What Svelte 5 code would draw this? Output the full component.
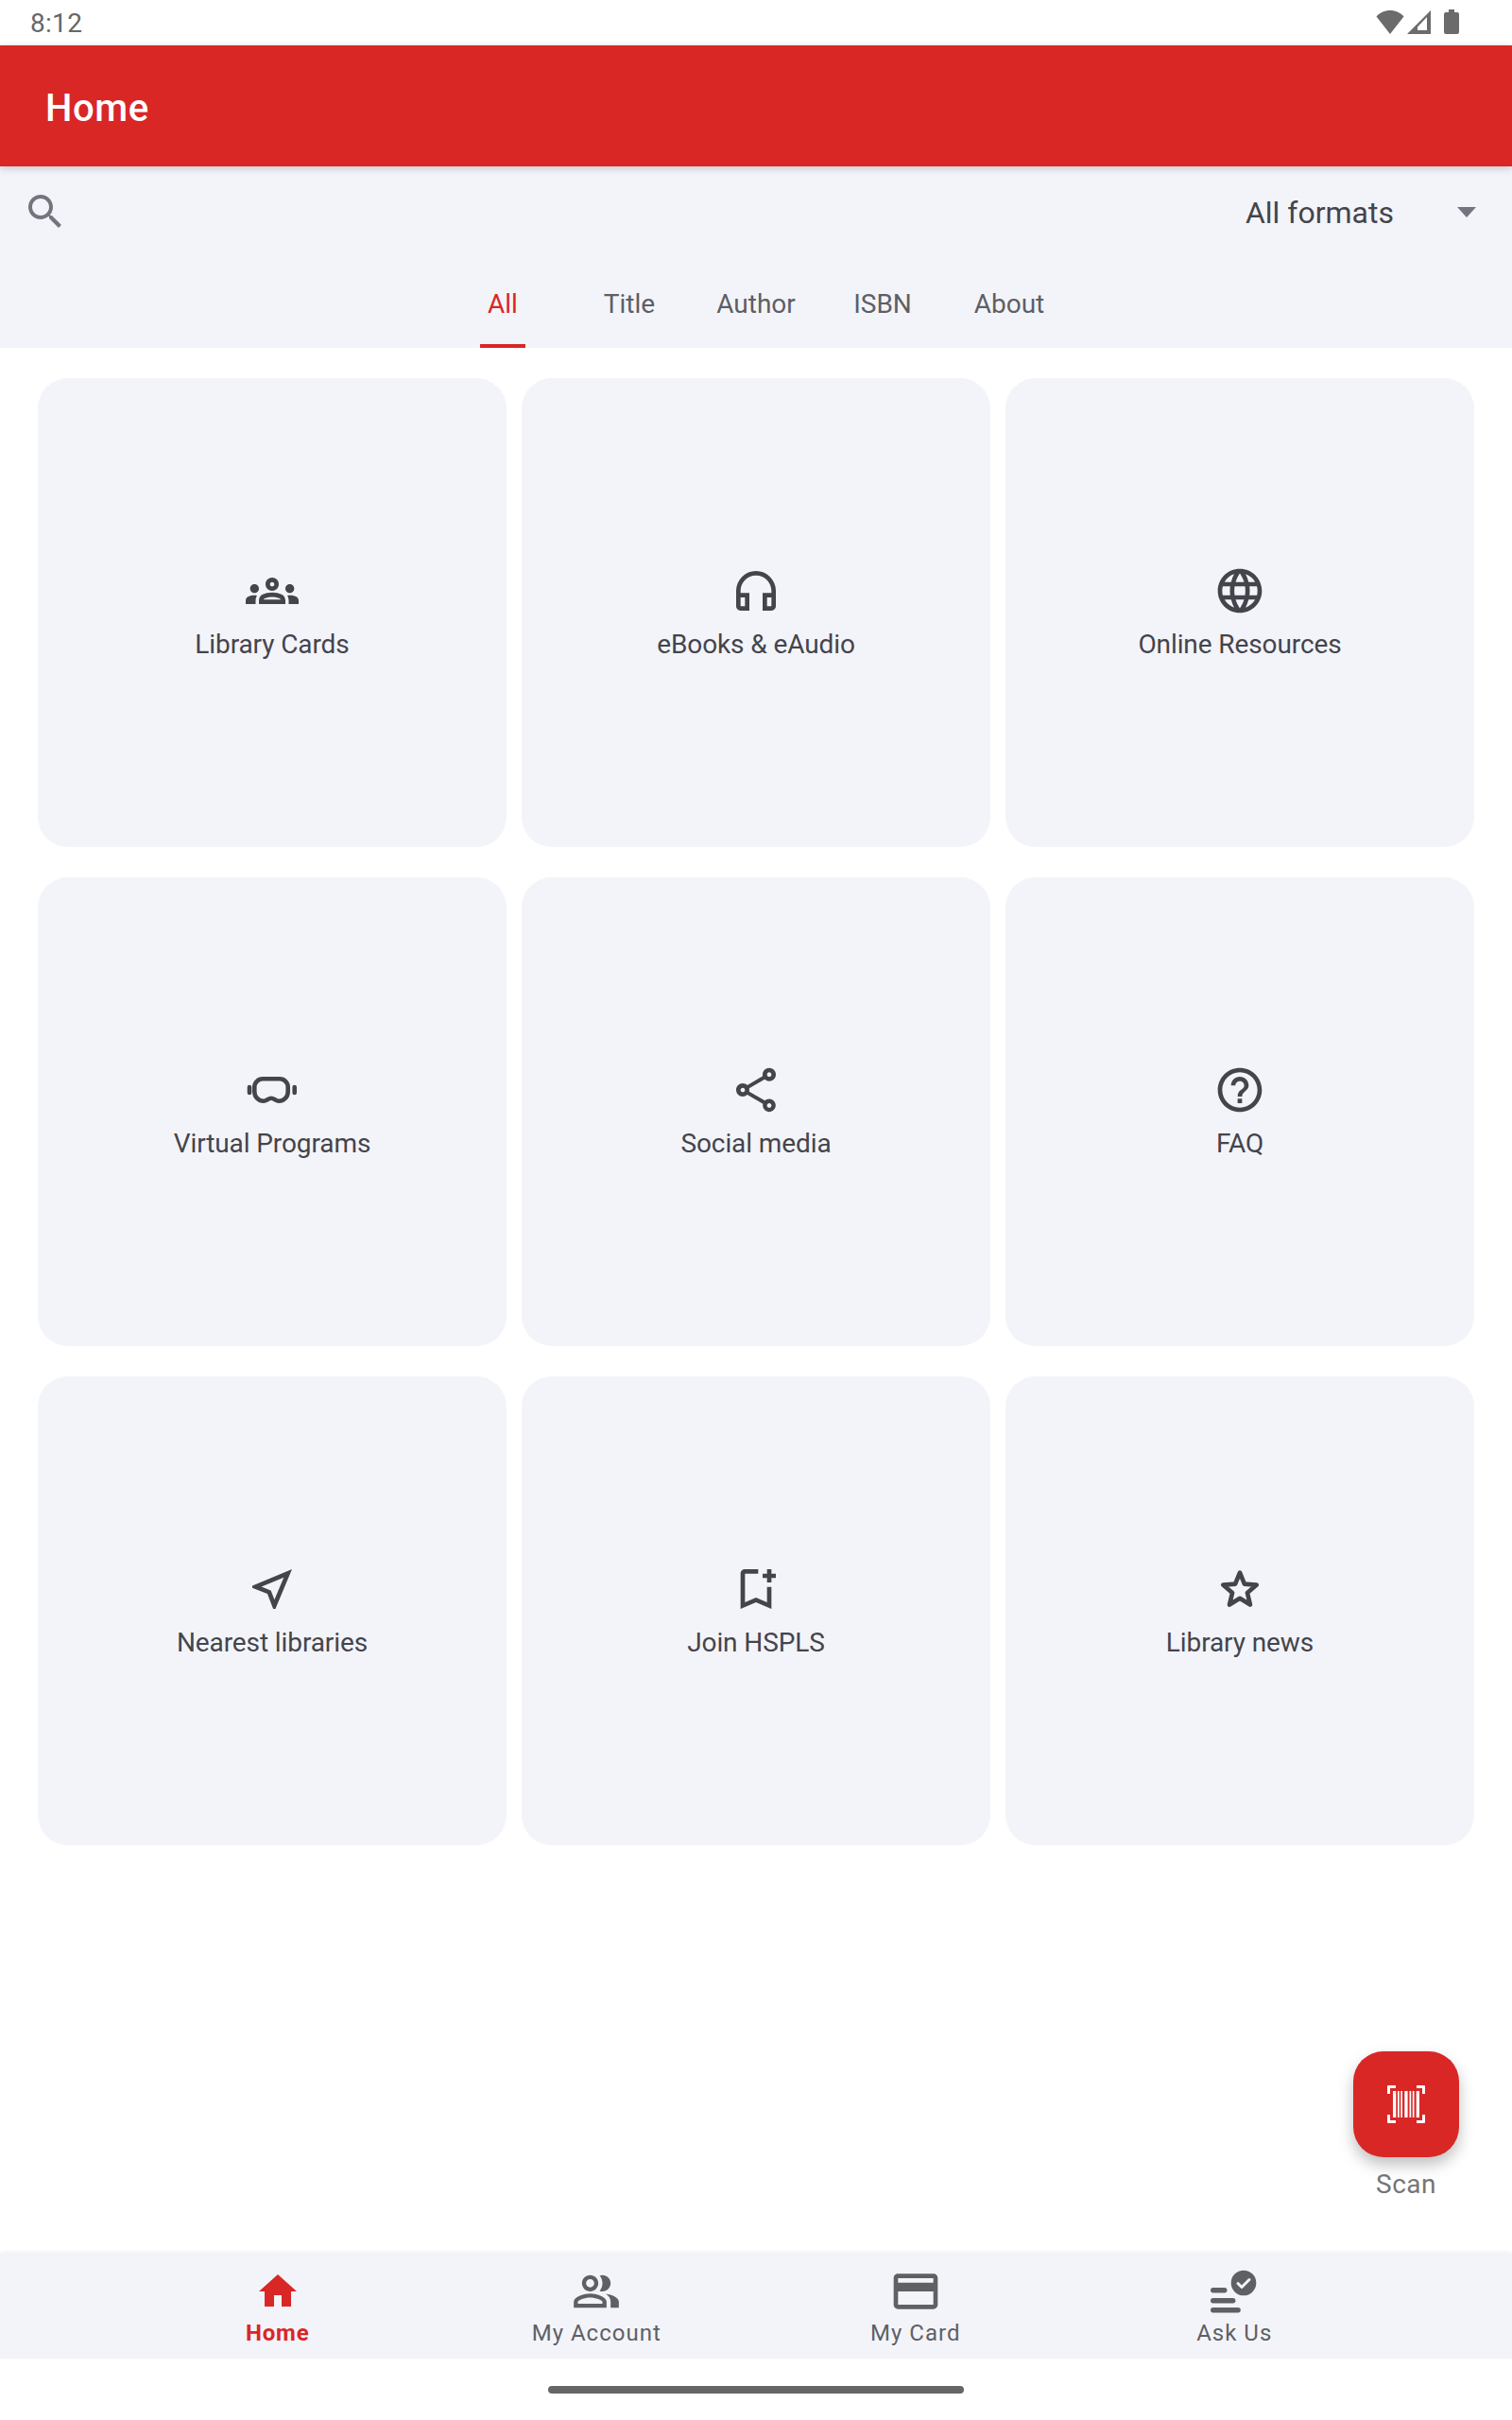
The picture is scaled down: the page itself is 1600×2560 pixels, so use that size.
<script>
	const cards = [
		{
			label: 'Library Cards',
			d: 'M4,13c1.1,0,2-0.9,2-2c0-1.1-0.9-2-2-2s-2,0.9-2,2C2,12.1,2.9,13,4,13z M5.13,14.1C4.76,14.04,4.39,14,4,14 c-0.99,0-1.93,0.21-2.78,0.58C0.48,14.9,0,15.62,0,16.43V18l4.5,0v-1.61C4.5,15.56,4.73,14.78,5.13,14.1z M20,13c1.1,0,2-0.9,2-2 c0-1.1-0.9-2-2-2s-2,0.9-2,2C18,12.1,18.9,13,20,13z M24,16.43c0-0.81-0.48-1.53-1.22-1.85C21.93,14.21,20.99,14,20,14 c-0.39,0-0.76,0.04-1.13,0.1c0.4,0.68,0.63,1.46,0.63,2.29V18l4.5,0V16.43z M16.24,13.65c-1.17-0.52-2.61-0.9-4.24-0.9 c-1.63,0-3.07,0.39-4.24,0.9C6.68,14.13,6,15.21,6,16.39V18h12v-1.61C18,15.21,17.32,14.13,16.24,13.65z M8.07,16 c0.09-0.23,0.13-0.39,0.91-0.69c0.97-0.38,1.99-0.56,3.02-0.56s2.05,0.18,3.02,0.56c0.77,0.3,0.81,0.46,0.91,0.69H8.07z M12,8 c0.55,0,1,0.45,1,1s-0.45,1-1,1s-1-0.45-1-1S11.45,8,12,8 M12,6c-1.66,0-3,1.34-3,3c0,1.66,1.34,3,3,3s3-1.34,3-3 C15,7.34,13.66,6,12,6L12,6z'
		},
		{
			label: 'eBooks & eAudio',
			d: 'M12 3a9 9 0 0 0-9 9v7c0 1.1.9 2 2 2h4v-8H5v-1c0-3.87 3.13-7 7-7s7 3.13 7 7v1h-4v8h4c1.1 0 2-.9 2-2v-7a9 9 0 0 0-9-9zM7 15v4H5v-4h2zm12 4h-2v-4h2v4z'
		},
		{
			label: 'Online Resources',
			d: 'M11.99 2C6.47 2 2 6.48 2 12s4.47 10 9.99 10C17.52 22 22 17.52 22 12S17.52 2 11.99 2zm6.93 6h-2.95c-.32-1.25-.78-2.45-1.38-3.56 1.84.63 3.37 1.91 4.33 3.56zM12 4.04c.83 1.2 1.48 2.53 1.91 3.96h-3.82c.43-1.43 1.08-2.76 1.91-3.96zM4.26 14C4.1 13.36 4 12.69 4 12s.1-1.36.26-2h3.38c-.08.66-.14 1.32-.14 2s.06 1.34.14 2H4.26zm.82 2h2.95c.32 1.25.78 2.45 1.38 3.56-1.84-.63-3.37-1.9-4.33-3.56zm2.95-8H5.08c.96-1.66 2.49-2.93 4.33-3.56C8.81 5.55 8.35 6.75 8.03 8zM12 19.96c-.83-1.2-1.48-2.53-1.91-3.96h3.82c-.43 1.43-1.08 2.76-1.91 3.96zM14.34 14H9.66c-.09-.66-.16-1.32-.16-2s.07-1.35.16-2h4.68c.09.65.16 1.32.16 2s-.07 1.34-.16 2zm.25 5.56c.6-1.11 1.06-2.31 1.38-3.56h2.95c-.96 1.65-2.49 2.93-4.33 3.56zM16.36 14c.08-.66.14-1.32.14-2s-.06-1.34-.14-2h3.38c.16.64.26 1.31.26 2s-.1 1.36-.26 2h-3.38z'
		},
		{
			label: 'Virtual Programs',
			box: 56,
			width: 4.6,
			d: 'M18 16.3H36a8.7 8.7 0 0 1 8.7 8.7V30a9.7 9.7 0 0 1-9.7 9.7c-3 0-5-3-8-3s-5 3-8 3A9.7 9.7 0 0 1 9.3 30V25A8.7 8.7 0 0 1 18 16.3zM4 25v6M51.7 25v6'
		},
		{
			label: 'Social media',
			d: 'M18 16.08c-.76 0-1.44.3-1.96.77L8.91 12.7c.05-.23.09-.46.09-.7s-.04-.47-.09-.7l7.05-4.11c.54.5 1.25.81 2.04.81 1.66 0 3-1.34 3-3s-1.34-3-3-3-3 1.34-3 3c0 .24.04.47.09.7L8.04 9.81C7.5 9.31 6.79 9 6 9c-1.66 0-3 1.34-3 3s1.34 3 3 3c.79 0 1.5-.31 2.04-.81l7.12 4.16c-.05.21-.08.43-.08.65 0 1.61 1.31 2.92 2.92 2.92 1.61 0 2.92-1.31 2.92-2.92s-1.31-2.92-2.92-2.92zM18 4c.55 0 1 .45 1 1s-.45 1-1 1-1-.45-1-1 .45-1 1-1zM6 13c-.55 0-1-.45-1-1s.45-1 1-1 1 .45 1 1-.45 1-1 1zm12 7.02c-.55 0-1-.45-1-1s.45-1 1-1 1 .45 1 1-.45 1-1 1z'
		},
		{
			label: 'FAQ',
			d: 'M11 18h2v-2h-2v2zm1-16C6.48 2 2 6.48 2 12s4.48 10 10 10 10-4.48 10-10S17.52 2 12 2zm0 18c-4.41 0-8-3.59-8-8s3.59-8 8-8 8 3.59 8 8-3.59 8-8 8zm0-14c-2.21 0-4 1.79-4 4h2c0-1.1.9-2 2-2s2 .9 2 2c0 2-3 1.75-3 5h2c0-2.25 3-2.5 3-5 0-2.21-1.79-4-4-4z'
		},
		{
			label: 'Nearest libraries',
			d: 'M17.27 6.73l-4.24 10.13-1.32-3.42-.32-.83-.82-.33-3.43-1.33 10.13-4.22M21 3L3 10.53v.98l6.84 2.65L12.48 21h.98L21 3z'
		},
		{
			label: 'Join HSPLS',
			d: 'M17,11v6.97l-5-2.14l-5,2.14V5h6V3H7C5.9,3,5,3.9,5,5v16l7-3l7,3V11H17z M21,7h-2v2h-2V7h-2V5h2V3h2V5h2V7z'
		},
		{
			label: 'Library news',
			box: 24,
			width: 2,
			d: 'M12 4.6L14.1 9.7 19.6 10.1 15.4 13.7 16.7 19.1 12 16.2 7.3 19.1 8.6 13.7 4.4 10.1 9.9 9.7z'
		}
	];

	const tabs = ['All', 'Title', 'Author', 'ISBN', 'About'];
</script>

<div class="page">
	<div class="status">
		<span class="time">8:12</span>
		<div class="status-icons">
			<svg width="30" height="25" viewBox="0 0 30 25"><path d="M15 25L.5 6.5C4 2.5 9 0 15 0s11 2.500 14.500 6.500z" /></svg>
			<svg class="signal" width="25" height="25" viewBox="0 0 25 25"><path fill-rule="evenodd" d="M25 0V25H0zM21 7L11 17.500V21H21z" /></svg>
			<svg class="battery" width="16" height="26" viewBox="0 0 16 26"><path d="M5 0h6v3h3a2 2 0 0 1 2 2v19a2 2 0 0 1-2 2H2a2 2 0 0 1-2-2V5a2 2 0 0 1 2-2h3z" /></svg>
		</div>
	</div>

	<header>Home</header>

	<section class="filters">
		<div class="search-row">
			<svg class="search" width="48" height="48" viewBox="0 0 24 24">
				<path d="M15.500 14h-.79l-.28-.27C15.410 12.590 16 11.110 16 9.500 16 5.910 13.090 3 9.500 3S3 5.910 3 9.500 5.910 16 9.500 16c1.610 0 3.090-.59 4.230-1.570l.27.28v.79l5 4.990L20.490 19l-4.990-5zm-6 0C7.010 14 5 11.990 5 9.500S7.010 5 9.500 5 14 7.010 14 9.500 11.990 14 9.500 14z" />
			</svg>
			<div class="select">
				<span>All formats</span>
				<i class="caret"></i>
			</div>
		</div>
		<nav class="tabs">
			{#each tabs as tab, i}
				<div class="tab" class:active={i === 0}>{tab}</div>
			{/each}
		</nav>
	</section>

	<main>
		{#each cards as card}
			<div class="card">
				{#if card.box}
					<svg class="outline" width="56" height="56" viewBox="0 0 {card.box} {card.box}" stroke-width={card.width}>
						<path d={card.d} />
					</svg>
				{:else}
					<svg class="solid" width="56" height="56" viewBox="0 0 24 24"><path d={card.d} /></svg>
				{/if}
				<span>{card.label}</span>
			</div>
		{/each}
	</main>

	<div class="scan">
		<button type="button" aria-label="Scan">
			<svg width="40" height="40" viewBox="0 0 40 40">
				<path d="M1 0h8v3H3v6H0V1a1 1 0 0 1 1-1zM31 0h8a1 1 0 0 1 1 1v8h-3V3h-6zM0 31h3v6h6v3H1a1 1 0 0 1-1-1zM37 31h3v8a1 1 0 0 1-1 1h-8v-3h6z" />
				<path d="M6 6h3.300v28H6zM11 6h1.700v28H11zM14.300 6h1.700v28h-1.700zM18.300 6h3.300v28h-3.300zM23.500 6h1.700v28h-1.700zM26.800 6h1.700v28h-1.700zM30.700 6H34v28h-3.300z" />
			</svg>
		</button>
		<span>Scan</span>
	</div>

	<nav class="bottom">
		<div class="nav-item active">
			<div class="nav-icon">
				<svg width="48" height="48" viewBox="0 0 24 24"><path d="M10 20v-6h4v6h5v-8h3L12 3 2 12h3v8z" /></svg>
			</div>
			<span>Home</span>
		</div>
		<div class="nav-item">
			<div class="nav-icon">
				<svg width="52" height="52" viewBox="0 0 24 24">
					<path d="M16.670 13.130C18.040 14.060 19 15.320 19 17v3h4v-3c0-2.180-3.570-3.470-6.330-3.870z" />
					<path d="M15 12c2.210 0 4-1.790 4-4s-1.790-4-4-4c-.47 0-.91.1-1.330.24C14.500 5.270 15 6.580 15 8s-.5 2.730-1.330 3.760c.42.14.86.24 1.330.24z" />
					<path d="M9 12c2.210 0 4-1.790 4-4s-1.790-4-4-4-4 1.790-4 4 1.790 4 4 4zm0-6c1.100 0 2 .9 2 2s-.9 2-2 2-2-.9-2-2 .9-2 2-2z" />
					<path d="M9 13c-2.670 0-8 1.340-8 4v3h16v-3c0-2.660-5.330-4-8-4zm6 5H3v-.99C3.200 16.290 6.300 15 9 15s5.800 1.290 6 2v1z" />
				</svg>
			</div>
			<span>My Account</span>
		</div>
		<div class="nav-item">
			<div class="nav-icon">
				<svg width="56" height="56" viewBox="0 0 24 24">
					<path d="M20 4H4c-1.110 0-1.990.89-1.990 2L2 18c0 1.110.89 2 2 2h16c1.110 0 2-.89 2-2V6c0-1.110-.89-2-2-2zm0 14H4v-6h16v6zm0-10H4V6h16v2z" />
				</svg>
			</div>
			<span>My Card</span>
		</div>
		<div class="nav-item">
			<div class="nav-icon">
				<svg width="56" height="56" viewBox="0 0 56 56">
					<rect x="3" y="24" width="17.500" height="5.500" rx="2.700" />
					<rect x="3" y="35" width="26.400" height="5.500" rx="2.700" />
					<rect x="3" y="45" width="31.800" height="5.500" rx="2.700" />
					<circle cx="38" cy="19" r="13.300" />
					<path class="tick" d="M32 19.500l4 4 8-8" />
				</svg>
			</div>
			<span>Ask Us</span>
		</div>
	</nav>

	<div class="home-bar"><i></i></div>
</div>

<style>
	:global(body) {
		background: #fff;
		font-family: Roboto, 'Liberation Sans', sans-serif;
	}
	.page {
		position: relative;
		display: flex;
		flex-direction: column;
		height: 2560px;
		overflow: hidden;
		background: #fff;
	}

	.status {
		display: flex;
		justify-content: space-between;
		align-items: center;
		height: 48px;
		padding: 0 56px 0 32px;
	}
	.time {
		font-size: 28px;
		letter-spacing: 0.3px;
		color: #666;
	}
	.status-icons {
		display: flex;
		align-items: center;
		margin-top: -2px;
	}
	.status-icons svg {
		fill: #6b6b6b;
		display: block;
	}
	.signal {
		margin-left: 3px;
	}
	.battery {
		margin-left: 14px;
	}

	header {
		position: relative;
		z-index: 1;
		height: 128px;
		box-sizing: border-box;
		padding: 4px 48px 0;
		display: flex;
		align-items: center;
		background: #d92726;
		color: #fff;
		font-size: 40px;
		font-weight: 500;
		letter-spacing: 0.6px;
		box-shadow: 0 2px 8px rgba(0, 0, 0, 0.2);
	}

	.filters {
		background: #f3f4f9;
	}
	.search-row {
		display: flex;
		justify-content: space-between;
		height: 96px;
		box-sizing: border-box;
		padding: 24px 38px 0 24px;
	}
	.search {
		fill: #72757e;
	}
	.select {
		display: flex;
		align-items: center;
		gap: 67px;
		height: 48px;
		font-size: 32px;
		color: #44444c;
	}
	.select span {
		padding-top: 2px;
	}
	.caret {
		width: 0;
		height: 0;
		border-left: 10.500px solid transparent;
		border-right: 10.500px solid transparent;
		border-top: 11px solid #72757e;
	}
	.tabs {
		display: flex;
		justify-content: center;
	}
	.tab {
		position: relative;
		display: flex;
		justify-content: center;
		align-items: center;
		width: 134px;
		height: 96px;
		box-sizing: border-box;
		padding-top: 2px;
		font-size: 28px;
		color: #5e5e66;
	}
	.tab.active {
		color: #d92726;
	}
	.tab.active::after {
		content: '';
		position: absolute;
		bottom: 0;
		left: 43px;
		width: 48px;
		height: 4px;
		background: #d92726;
	}

	main {
		flex: 1;
		display: grid;
		grid-template-columns: repeat(3, 1fr);
		grid-auto-rows: 496px;
		gap: 32px 16px;
		align-content: start;
		padding: 32px 40px;
	}
	.card {
		display: flex;
		flex-direction: column;
		align-items: center;
		justify-content: center;
		gap: 12px;
		box-sizing: border-box;
		padding-bottom: 2px;
		border-radius: 32px;
		background: #f3f4f9;
		font-size: 28px;
		letter-spacing: -0.1px;
		color: #44444c;
	}
	.solid {
		fill: #44444c;
	}
	.outline {
		fill: none;
		stroke: #44444c;
		stroke-linecap: round;
		stroke-linejoin: round;
	}

	.scan {
		position: absolute;
		top: 2170px;
		left: 1432px;
		width: 112px;
		display: flex;
		flex-direction: column;
		align-items: center;
		gap: 12px;
		font-size: 28px;
		letter-spacing: 0.5px;
		color: #757575;
	}
	.scan button {
		display: flex;
		align-items: center;
		justify-content: center;
		width: 112px;
		height: 112px;
		padding: 0;
		border: none;
		border-radius: 32px;
		background: #d92726;
		box-shadow: 0 8px 16px rgba(0, 0, 0, 0.25);
	}
	.scan svg {
		fill: #fff;
	}

	.bottom {
		display: grid;
		grid-template-columns: repeat(4, 337.500px);
		justify-content: center;
		height: 112px;
		background: #f3f4f9;
		box-shadow: 0 -1px 4px rgba(0, 0, 0, 0.06);
	}
	.nav-item {
		display: flex;
		flex-direction: column;
		align-items: center;
		padding-top: 13px;
		font-size: 24px;
		letter-spacing: 1px;
		color: #5f6064;
	}
	.nav-item span {
		padding-top: 2px;
	}
	.nav-item.active {
		color: #d92726;
		font-weight: 700;
		letter-spacing: 0.8px;
	}
	.nav-icon {
		display: flex;
		align-items: center;
		justify-content: center;
		height: 56px;
		fill: currentColor;
	}
	.tick {
		fill: none;
		stroke: #f3f4f9;
		stroke-width: 3;
		stroke-linecap: round;
		stroke-linejoin: round;
	}

	.home-bar {
		display: flex;
		justify-content: center;
		height: 65px;
		padding-top: 29px;
		box-sizing: border-box;
	}
	.home-bar i {
		width: 440px;
		height: 8px;
		border-radius: 4px;
		background: #666;
	}
</style>
